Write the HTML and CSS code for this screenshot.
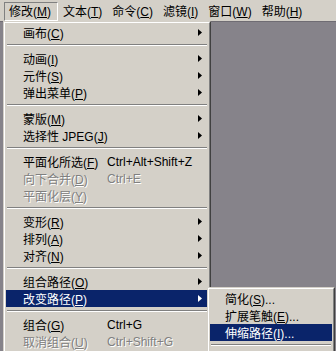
FILE: index.html
```html
<!DOCTYPE html>
<html lang="zh-CN">
<head>
<meta charset="utf-8">
<title>修改菜单</title>
<link rel="stylesheet" href="styles.css">
</head>
<body>
<div class="app">
  <div class="menubar">
    <div class="mb-item pressed">修改(<u>M</u>)</div>
    <div class="mb-item">文本(<u>T</u>)</div>
    <div class="mb-item">命令(<u>C</u>)</div>
    <div class="mb-item">滤镜(<u>I</u>)</div>
    <div class="mb-item">窗口(<u>W</u>)</div>
    <div class="mb-item">帮助(<u>H</u>)</div>
  </div>
  <div class="workspace"></div>

  <div class="menu main-menu">
    <div class="item"><span class="label">画布(<u>C</u>)</span><span class="key"></span><svg class="arrow" width="4" height="7" viewBox="0 0 4 7"><path d="M0 0L4 3.5L0 7Z"/></svg></div>
    <div class="sep"></div>
    <div class="item"><span class="label">动画(<u>I</u>)</span><span class="key"></span><svg class="arrow" width="4" height="7" viewBox="0 0 4 7"><path d="M0 0L4 3.5L0 7Z"/></svg></div>
    <div class="item"><span class="label">元件(<u>S</u>)</span><span class="key"></span><svg class="arrow" width="4" height="7" viewBox="0 0 4 7"><path d="M0 0L4 3.5L0 7Z"/></svg></div>
    <div class="item"><span class="label">弹出菜单(<u>P</u>)</span><span class="key"></span><svg class="arrow" width="4" height="7" viewBox="0 0 4 7"><path d="M0 0L4 3.5L0 7Z"/></svg></div>
    <div class="sep"></div>
    <div class="item"><span class="label">蒙版(<u>M</u>)</span><span class="key"></span><svg class="arrow" width="4" height="7" viewBox="0 0 4 7"><path d="M0 0L4 3.5L0 7Z"/></svg></div>
    <div class="item"><span class="label">选择性 JPEG(<u>J</u>)</span><span class="key"></span><svg class="arrow" width="4" height="7" viewBox="0 0 4 7"><path d="M0 0L4 3.5L0 7Z"/></svg></div>
    <div class="sep"></div>
    <div class="item"><span class="label">平面化所选(<u>F</u>)</span><span class="key">Ctrl+Alt+Shift+Z</span></div>
    <div class="item disabled"><span class="label">向下合并(<u>D</u>)</span><span class="key">Ctrl+E</span></div>
    <div class="item disabled"><span class="label">平面化层(<u>Y</u>)</span><span class="key"></span></div>
    <div class="sep"></div>
    <div class="item"><span class="label">变形(<u>R</u>)</span><span class="key"></span><svg class="arrow" width="4" height="7" viewBox="0 0 4 7"><path d="M0 0L4 3.5L0 7Z"/></svg></div>
    <div class="item"><span class="label">排列(<u>A</u>)</span><span class="key"></span><svg class="arrow" width="4" height="7" viewBox="0 0 4 7"><path d="M0 0L4 3.5L0 7Z"/></svg></div>
    <div class="item"><span class="label">对齐(<u>N</u>)</span><span class="key"></span><svg class="arrow" width="4" height="7" viewBox="0 0 4 7"><path d="M0 0L4 3.5L0 7Z"/></svg></div>
    <div class="sep"></div>
    <div class="item"><span class="label">组合路径(<u>O</u>)</span><span class="key"></span><svg class="arrow" width="4" height="7" viewBox="0 0 4 7"><path d="M0 0L4 3.5L0 7Z"/></svg></div>
    <div class="item active"><span class="label">改变路径(<u>P</u>)</span><span class="key"></span><svg class="arrow" width="4" height="7" viewBox="0 0 4 7"><path d="M0 0L4 3.5L0 7Z"/></svg></div>
    <div class="sep"></div>
    <div class="item"><span class="label">组合(<u>G</u>)</span><span class="key">Ctrl+G</span></div>
    <div class="item disabled"><span class="label">取消组合(<u>U</u>)</span><span class="key">Ctrl+Shift+G</span></div>
    <div class="sep"></div>
  </div>

  <div class="menu sub-menu">
    <div class="item"><span class="label">简化(<u>S</u>)...</span></div>
    <div class="item"><span class="label">扩展笔触(<u>E</u>)...</span></div>
    <div class="item active"><span class="label">伸缩路径(<u>I</u>)...</span></div>
    <div class="sep"></div>
    <div class="item"><span class="label">&nbsp;</span></div>
  </div>
</div>
</body>
</html>
```

FILE: styles.css
```css
html, body {
  margin: 0;
  padding: 0;
  width: 336px;
  height: 351px;
  overflow: hidden;
  background: #86838a;
}

.app {
  position: relative;
  width: 336px;
  height: 351px;
  overflow: hidden;
  font-family: "Liberation Sans", "Noto Sans CJK SC", sans-serif;
  font-size: 12px;
  color: #000;
}

u {
  text-decoration: underline;
  text-underline-offset: 1px;
}

/* ---------- menu bar ---------- */
.menubar {
  display: flex;
  align-items: flex-start;
  height: 21px;
  padding: 2px 0 0 4px;
  background: #d4d0c8;
  box-sizing: border-box;
}

.mb-item {
  height: 19px;
  line-height: 19px;
  padding: 0 4px;
  white-space: nowrap;
  box-sizing: border-box;
  border: 1px solid transparent;
}

.mb-item.pressed {
  border-color: #808080 #ffffff #ffffff #808080;
  padding: 0 6px 0 4px;
}

.workspace {
  height: 330px;
  background: #86838a;
  border-top: 1px solid #6f6c73;
  box-sizing: border-box;
}

/* ---------- menus ---------- */
.menu {
  position: absolute;
  background: #d4d0c8;
  box-sizing: border-box;
  border: 1px solid;
  border-color: #d4d0c8 #404040 #404040 #d4d0c8;
}

.menu::before {
  content: "";
  position: absolute;
  inset: 0;
  border: 1px solid;
  border-color: #ffffff #808080 #808080 #ffffff;
  pointer-events: none;
}

.main-menu {
  left: 3px;
  top: 21px;
  width: 208px;
  height: 345px;
  padding: 2px;
}

.sub-menu {
  left: 207px;
  top: 287px;
  width: 128px;
  height: 90px;
  padding: 2px;
}

.item {
  position: relative;
  display: flex;
  align-items: center;
  height: 17px;
  padding: 0 6px 0 17px;
  white-space: nowrap;
}

.sub-menu .item {
  padding-left: 15px;
}

.label {
  flex: none;
  width: 84px;
}

.sub-menu .label {
  width: auto;
}

.key {
  flex: 1;
}

.arrow {
  flex: none;
  fill: #000;
}

.item.active {
  background: #0a246a;
  color: #ffffff;
}

.item.active .arrow {
  fill: #ffffff;
}

.item.disabled {
  color: #808080;
  text-shadow: 1px 1px 0 #ffffff;
}

.sep {
  position: relative;
  height: 9px;
  margin: 0 1px;
}

.sep::after {
  content: "";
  position: absolute;
  left: 0;
  right: 0;
  top: 3px;
  height: 1px;
  background: #808080;
  border-bottom: 1px solid #ffffff;
}
```
